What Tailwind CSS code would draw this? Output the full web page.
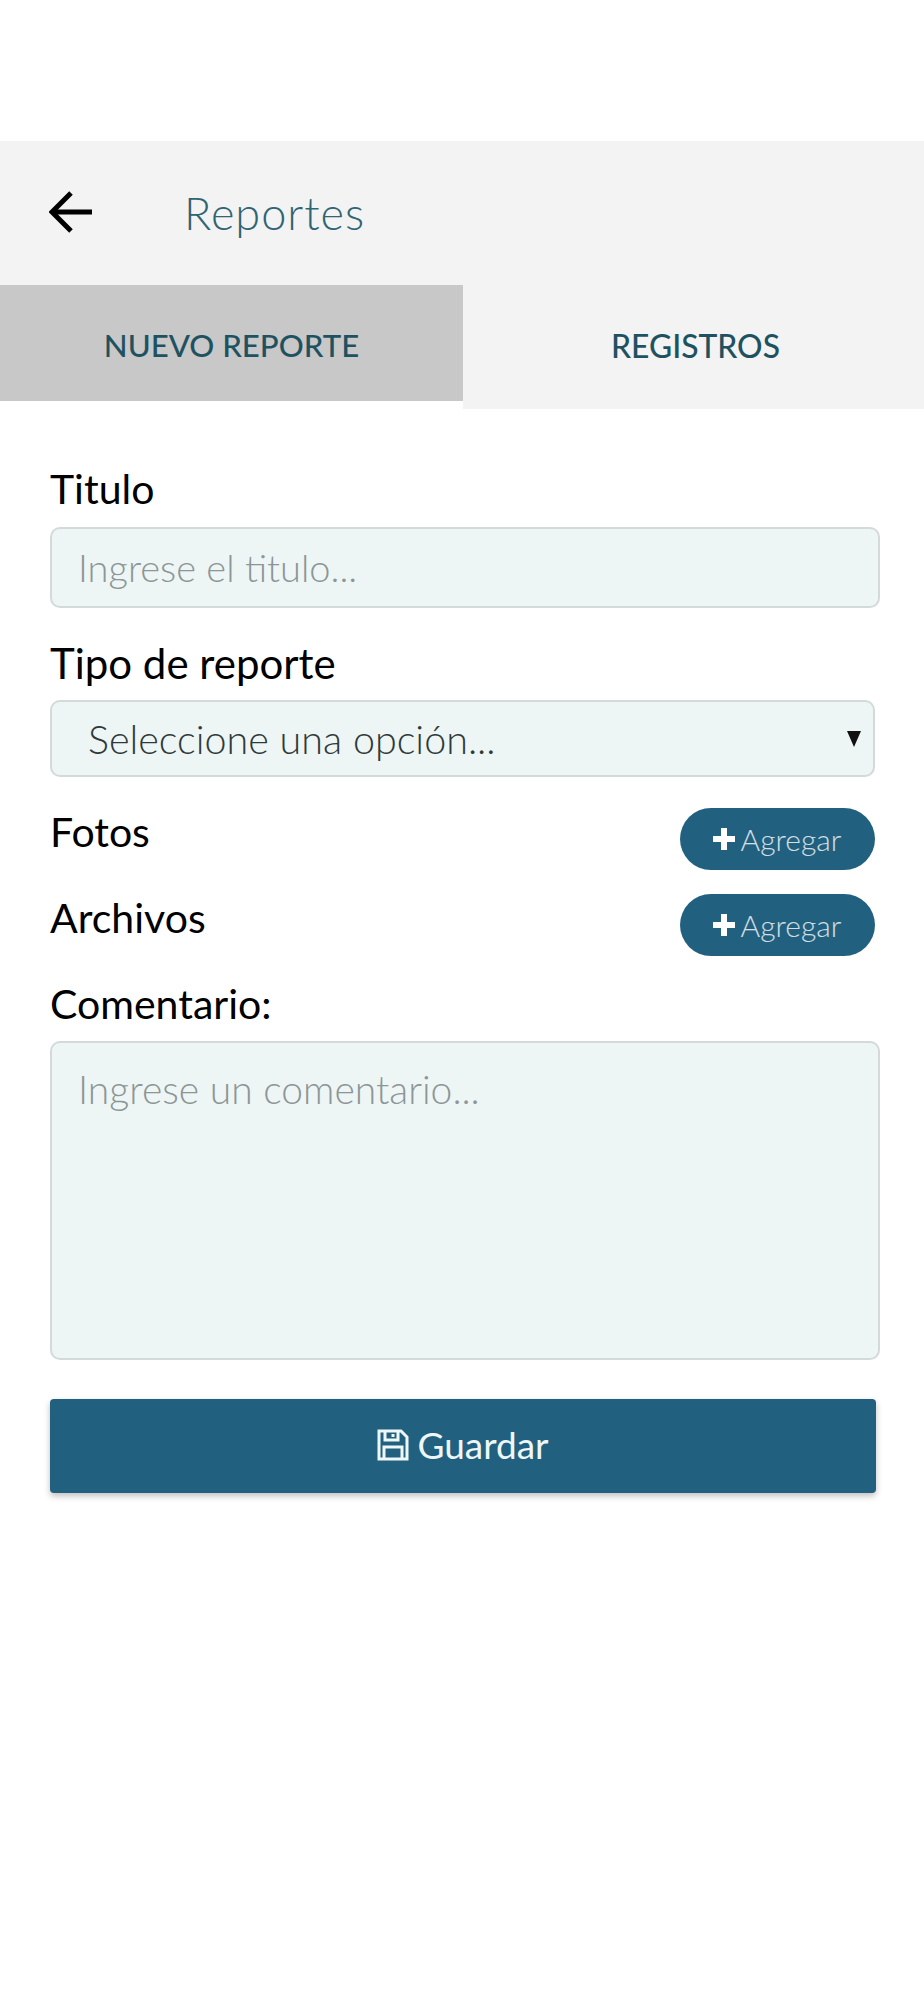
<!DOCTYPE html>
<html lang="es">

<head>
  <meta charset="UTF-8">
  <meta name="viewport" content="width=device-width, initial-scale=1.0">
  <title>Reportes</title>
  <script src="https://cdn.jsdelivr.net/npm/@tailwindcss/browser@4"></script>
</head>

<body class="bg-white min-h-screen font-['Lato','Open_Sans',sans-serif] text-black">

  <div class="h-[141px]"></div>

  <header class="bg-[#f3f3f3] h-[144px] flex items-center pl-[49px]">
    <svg class="w-[44px] h-[44px] mt-[-2px]" viewBox="0 0 44 44" fill="none" stroke="#000" stroke-width="5">
      <path d="M43 22H5" />
      <path d="M22 3L3 22l19 19" />
    </svg>
    <h1 class="ml-[91px] text-[45px] font-light text-[#2f6472] tracking-[1px] leading-none">Reportes</h1>
  </header>

  <nav class="flex items-start bg-white h-[124px]">
    <button class="w-[463px] h-[116px] pt-[5px] bg-[#c8c8c8] text-[31.2px] font-medium text-[#1f5261] leading-none">NUEVO REPORTE</button>
    <button class="w-[461px] h-[124px] pl-[4px] bg-[#f3f3f3] text-[31.8px] font-medium text-[#1f5261] leading-none">REGISTROS</button>
  </nav>

  <form class="px-[50px] pt-[57px]">
    <label for="titulo" class="block text-[41px] leading-[46px] h-[61px]">Titulo</label>
    <input id="titulo" type="text" placeholder="Ingrese el titulo..."
      class="block w-[830px] h-[81px] px-[26px] pb-[2px] bg-[#eef5f5] border-2 border-[#d4d9d9] rounded-[10px] text-[38px] font-light placeholder:text-[#8c9696]">

    <label for="tipo" class="block mt-[32px] text-[42px] leading-[46px] h-[60px]">Tipo de reporte</label>
    <div class="relative w-[825px]">
      <select id="tipo"
        class="block w-full h-[77px] pl-[36px] bg-[#eef5f5] border-2 border-[#d4d9d9] rounded-[10px] text-[39.5px] font-light text-[#2e3a3a] appearance-none">
        <option>Seleccione una opción...</option>
      </select>
      <svg class="absolute right-[14px] top-[31px] w-[14px] h-[16px]" viewBox="0 0 14 16" fill="#111">
        <path d="M0 0h14L7 16z" />
      </svg>
    </div>

    <div class="w-[825px] mt-[31px] flex justify-between h-[62px]">
      <span class="text-[41px] leading-[46px] mt-[1px]">Fotos</span>
      <button type="button" class="w-[195px] h-[62px] rounded-full bg-[#22607f] text-white/80 text-[30px] font-light flex items-center justify-center gap-[5px] pr-[2px]">
        <svg class="w-[24px] h-[24px]" viewBox="0 0 24 24" fill="none" stroke="#fff" stroke-width="6"><path d="M12 1v22M1 12h22" /></svg>
        Agregar
      </button>
    </div>

    <div class="w-[825px] mt-[24px] flex justify-between h-[62px]">
      <span class="text-[41px] leading-[46px] mt-[1px]">Archivos</span>
      <button type="button" class="w-[195px] h-[62px] rounded-full bg-[#22607f] text-white/80 text-[30px] font-light flex items-center justify-center gap-[5px] pr-[2px]">
        <svg class="w-[24px] h-[24px]" viewBox="0 0 24 24" fill="none" stroke="#fff" stroke-width="6"><path d="M12 1v22M1 12h22" /></svg>
        Agregar
      </button>
    </div>

    <label for="comentario" class="block mt-[25px] text-[41px] leading-[46px] h-[60px]">Comentario:</label>
    <textarea id="comentario" placeholder="Ingrese un comentario..."
      class="block w-[830px] h-[319px] px-[26px] pt-[17px] bg-[#eef5f5] border-2 border-[#d4d9d9] rounded-[10px] text-[39px] font-light placeholder:text-[#8c9696] resize-none"></textarea>

    <button type="button"
      class="mt-[39px] w-[826px] h-[94px] pb-[2px] bg-[#22607f] rounded-[4px] shadow-[0_3px_6px_rgba(0,0,0,0.25)] text-[37px] text-[#eef7f8] flex items-center justify-center gap-[8px]">
      <svg class="w-[32px] h-[32px]" viewBox="0 0 32 32" fill="none" stroke="#eef7f8" stroke-width="3">
        <path d="M2 2h22l6 6v22H2z" />
        <path d="M8 2v9h13V2" />
        <path d="M7 30V18h18v12" />
        <path d="M16 5v3" />
      </svg>
      Guardar
    </button>
  </form>

</body>

</html>
